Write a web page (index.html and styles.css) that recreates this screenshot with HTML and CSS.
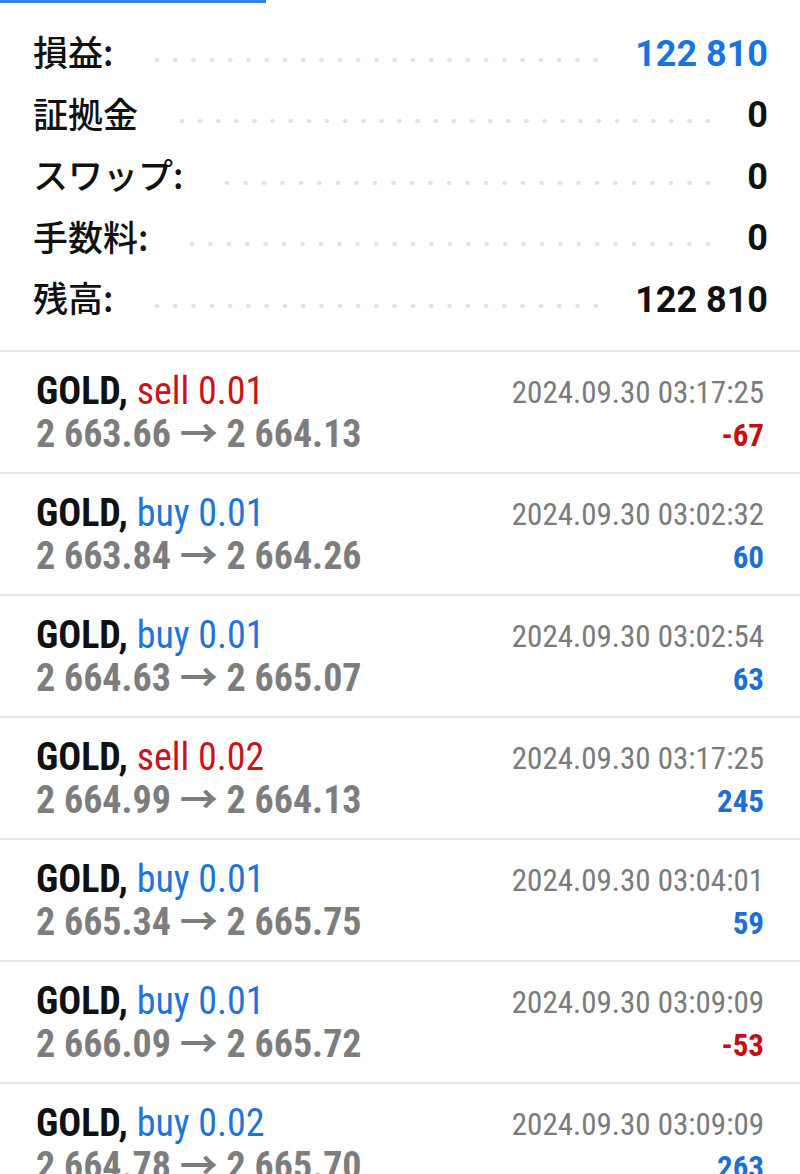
FILE: index.html
```html
<!DOCTYPE html>
<html lang="ja">
  <head>
    <meta charset="UTF-8" />
    <meta name="viewport" content="width=device-width, initial-scale=1.0" />
    <title>履歴</title>
    <link rel="stylesheet" href="styles.css">
  </head>
  <body>
    <div class="tab-indicator"></div>

    <div class="summary">
      <div class="summary-row">
        <span class="label">損益:</span>
        <span class="dots"></span>
        <span class="value profit">122 810</span>
      </div>
      <div class="summary-row">
        <span class="label">証拠金</span>
        <span class="dots"></span>
        <span class="value">0</span>
      </div>
      <div class="summary-row">
        <span class="label">スワップ:</span>
        <span class="dots"></span>
        <span class="value">0</span>
      </div>
      <div class="summary-row">
        <span class="label">手数料:</span>
        <span class="dots"></span>
        <span class="value">0</span>
      </div>
      <div class="summary-row">
        <span class="label">残高:</span>
        <span class="dots"></span>
        <span class="value">122 810</span>
      </div>
    </div>

    <div class="trades">
      <div class="trade">
        <div class="trade-left">
          <div class="symbol">GOLD, <span class="sell">sell 0.01</span></div>
          <div class="prices">2 663.66 → 2 664.13</div>
        </div>
        <div class="trade-right">
          <div class="time">2024.09.30 03:17:25</div>
          <div class="result loss">-67</div>
        </div>
      </div>
      <div class="trade">
        <div class="trade-left">
          <div class="symbol">GOLD, <span class="buy">buy 0.01</span></div>
          <div class="prices">2 663.84 → 2 664.26</div>
        </div>
        <div class="trade-right">
          <div class="time">2024.09.30 03:02:32</div>
          <div class="result gain">60</div>
        </div>
      </div>
      <div class="trade">
        <div class="trade-left">
          <div class="symbol">GOLD, <span class="buy">buy 0.01</span></div>
          <div class="prices">2 664.63 → 2 665.07</div>
        </div>
        <div class="trade-right">
          <div class="time">2024.09.30 03:02:54</div>
          <div class="result gain">63</div>
        </div>
      </div>
      <div class="trade">
        <div class="trade-left">
          <div class="symbol">GOLD, <span class="sell">sell 0.02</span></div>
          <div class="prices">2 664.99 → 2 664.13</div>
        </div>
        <div class="trade-right">
          <div class="time">2024.09.30 03:17:25</div>
          <div class="result gain">245</div>
        </div>
      </div>
      <div class="trade">
        <div class="trade-left">
          <div class="symbol">GOLD, <span class="buy">buy 0.01</span></div>
          <div class="prices">2 665.34 → 2 665.75</div>
        </div>
        <div class="trade-right">
          <div class="time">2024.09.30 03:04:01</div>
          <div class="result gain">59</div>
        </div>
      </div>
      <div class="trade">
        <div class="trade-left">
          <div class="symbol">GOLD, <span class="buy">buy 0.01</span></div>
          <div class="prices">2 666.09 → 2 665.72</div>
        </div>
        <div class="trade-right">
          <div class="time">2024.09.30 03:09:09</div>
          <div class="result loss">-53</div>
        </div>
      </div>
      <div class="trade">
        <div class="trade-left">
          <div class="symbol">GOLD, <span class="buy">buy 0.02</span></div>
          <div class="prices">2 664.78 → 2 665.70</div>
        </div>
        <div class="trade-right">
          <div class="time">2024.09.30 03:09:09</div>
          <div class="result gain">263</div>
        </div>
      </div>
    </div>
  </body>
</html>
```

FILE: styles.css
```css
body {
  margin: 0;
  background-color: #fff;
  font-family: Roboto, "Noto Sans CJK JP", sans-serif;
  overflow: hidden;
}

.tab-indicator {
  width: 266px;
  height: 3px;
  background-color: #3a7ee4;
}

.summary {
  padding: 17px 32px 22px 33px;
}

.summary-row {
  display: flex;
  align-items: center;
  height: 61.5px;
}

.label {
  font-family: "Noto Sans CJK JP", sans-serif;
  font-size: 35px;
  font-weight: 500;
  color: #111;
}

.dots {
  flex: 1;
  height: 4px;
  margin: 18px 30px 0 35px;
  background-image: radial-gradient(circle, #e3e3e3 2px, transparent 2.5px);
  background-size: 18px 4px;
  background-repeat: space no-repeat;
}

.value {
  margin-top: 6px;
  font-size: 36px;
  font-weight: 700;
  color: #111;
}

.value.profit {
  color: #1a73e3;
}

.trade {
  display: flex;
  justify-content: space-between;
  height: 120px;
  padding: 0 36px;
  border-top: 2px solid #e6e6e6;
}

.trade-left,
.trade-right {
  padding-top: 18px;
  font-stretch: condensed;
}

.trade-right {
  text-align: right;
}

.symbol,
.prices {
  font-size: 38px;
  line-height: 43px;
  font-weight: 700;
  color: #111;
}

.prices {
  color: #7d7d7d;
}

.sell,
.buy {
  font-weight: 400;
}

.sell {
  color: #c8141a;
}

.buy {
  color: #1f74db;
}

.time,
.result {
  font-size: 31px;
  line-height: 43px;
  color: #7b7b7b;
}

.time {
  padding-top: 1px;
}

.result {
  font-weight: 700;
}

.result.gain {
  color: #1d6fd6;
}

.result.loss {
  color: #c40f12;
}
```
